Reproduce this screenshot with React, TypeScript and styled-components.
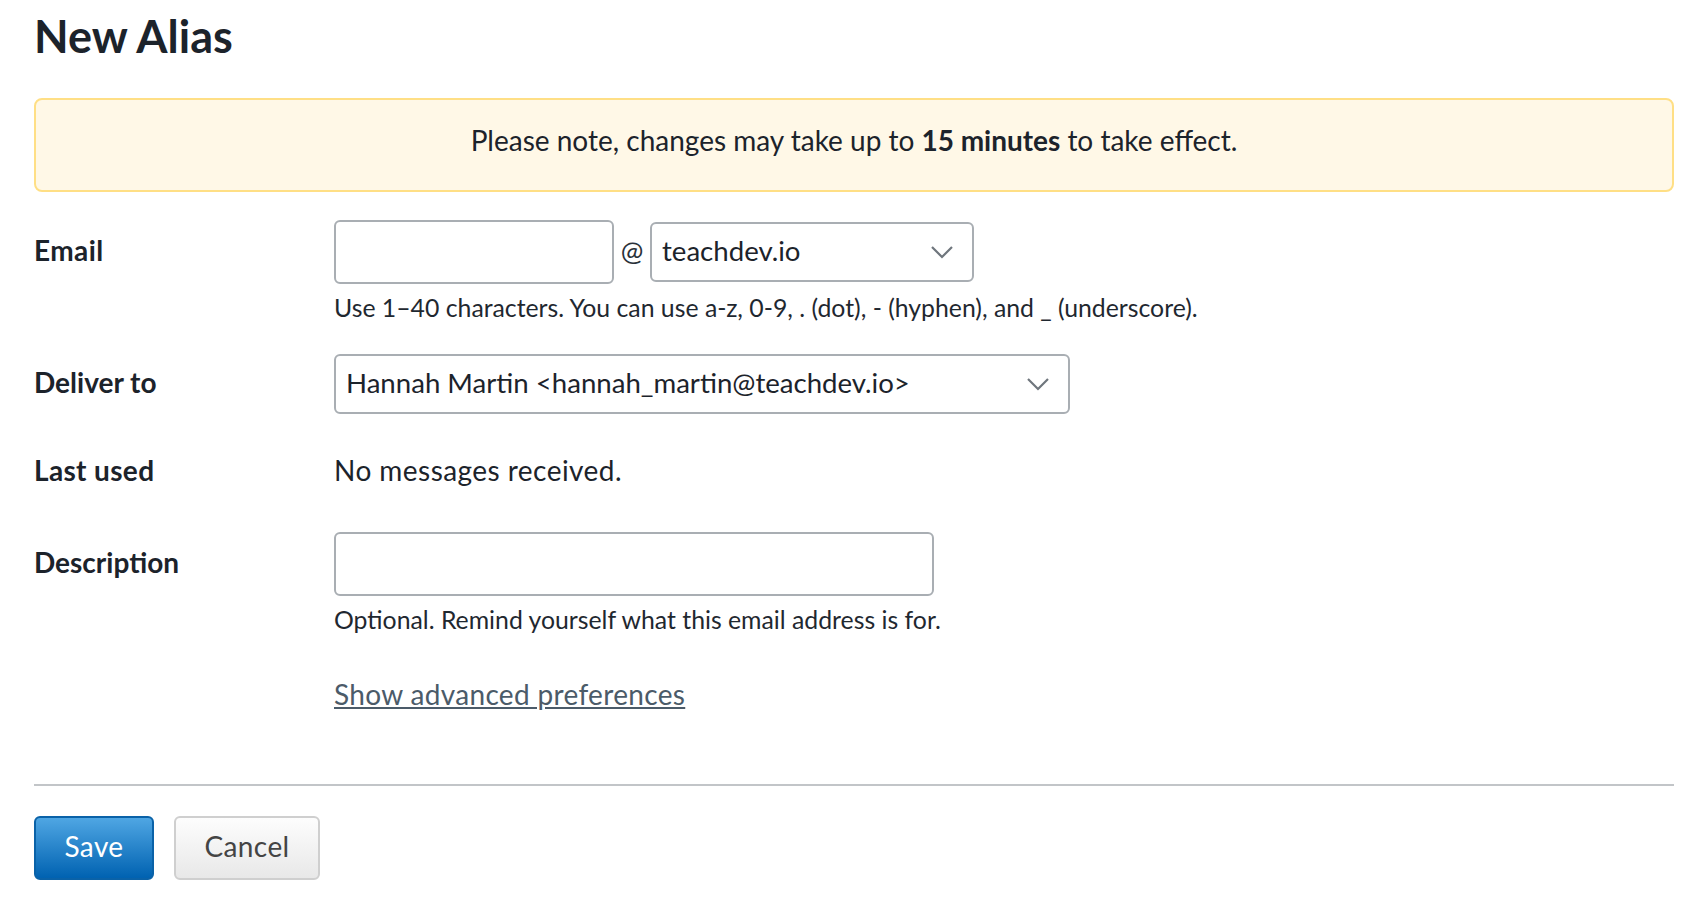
import React from "react";
import styled, { createGlobalStyle } from "styled-components";

const Global = createGlobalStyle`
  html, body { margin: 0; padding: 0; background: #fff; }
  body { font-family: "Lato", "Liberation Sans", sans-serif; color: #1c232b; }
`;

const Page = styled.main`
  width: 1704px;
  height: 910px;
  box-sizing: border-box;
  padding: 0 30px 0 34px;
  overflow: hidden;
`;
const Title = styled.h1`
  margin: 0;
  height: 98px;
  box-sizing: border-box;
  padding-top: 9px;
  font-size: 45px;
  line-height: 54px;
  font-weight: 700;
  color: #1c232b;
`;
const Banner = styled.div`
  height: 94px;
  box-sizing: border-box;
  display: flex;
  align-items: center;
  justify-content: center;
  padding-bottom: 10px;
  background: #fff8e7;
  border: 2px solid #ffdf85;
  border-radius: 8px;
  font-size: 28px;
  margin-bottom: 28px;
  b { font-weight: 700; margin: 0 0.25em; }
`;
const Row = styled.div<{ $after: number }>`
  display: grid;
  grid-template-columns: 300px 1fr;
  margin-bottom: ${(p) => p.$after}px;
`;
const Label = styled.label<{ $h: number; $ls?: number }>`
  font-size: 28px;
  font-weight: 700;
  line-height: ${(p) => p.$h}px;
  letter-spacing: ${(p) => p.$ls ?? 0}px;
`;
const Inline = styled.div`
  display: flex;
  align-items: center;
  height: 64px;
`;
const TextInput = styled.input<{ $w: number }>`
  display: block;
  width: ${(p) => p.$w}px;
  height: 64px;
  box-sizing: border-box;
  border: 2px solid #a9aeb3;
  border-radius: 6px;
  background: #fff;
  padding: 0 10px;
  font: inherit;
  outline: none;
`;
const At = styled.span`
  width: 36px;
  text-align: center;
  font-size: 27px;
  color: #2a323a;
  margin-bottom: 3px;
`;
const Select = styled.div<{ $w: number }>`
  width: ${(p) => p.$w}px;
  height: 60px;
  box-sizing: border-box;
  border: 2px solid #a9aeb3;
  border-radius: 6px;
  display: flex;
  align-items: center;
  justify-content: space-between;
  padding: 0 18px 0 10px;
  font-size: 27.6px;
  background: #fff;
`;
const SelectText = styled.span`
  margin-bottom: 4px;
`;
const Chevron = styled.svg`
  width: 24px;
  height: 14px;
  flex: none;
`;
const Hint = styled.div`
  margin-top: 7px;
  font-size: 24.8px;
  line-height: 34px;
  color: #1f2830;
`;
const Value = styled.div`
  font-size: 28px;
  line-height: 34px;
  letter-spacing: 0.45px;
`;
const AdvancedLink = styled.a`
  display: block;
  font-size: 28px;
  line-height: 34px;
  letter-spacing: 0.33px;
  color: #4b5b69;
  text-decoration: underline;
`;
const Divider = styled.hr`
  margin: 0 0 30px;
  border: 0;
  height: 2px;
  background: #c2c5c8;
`;
const Actions = styled.div`
  display: flex;
  gap: 20px;
`;
const Button = styled.button<{ $primary?: boolean; $w: number }>`
  width: ${(p) => p.$w}px;
  height: 64px;
  box-sizing: border-box;
  border-radius: 6px;
  padding: 0 0 4px;
  font-family: inherit;
  font-size: 28px;
  letter-spacing: 0.4px;
  border: 2px solid ${(p) => (p.$primary ? "#0a62a8" : "#cfcfcf")};
  color: ${(p) => (p.$primary ? "#fff" : "#444")};
  background: ${(p) =>
    p.$primary
      ? "linear-gradient(#4fa6e3, #0062b1)"
      : "linear-gradient(#fdfdfd, #e8e8e8)"};
`;

const ChevronIcon = () => (
  <Chevron viewBox="0 0 24 14" fill="none" stroke="#6f767d" strokeWidth="2.2">
    <polyline points="2,2 12,12 22,2" />
  </Chevron>
);

export default function App() {
  return (
    <Page>
      <Global />
      <Title>New Alias</Title>
      <Banner>
        Please note, changes may take up to <b>15 minutes</b> to take effect.
      </Banner>
      <Row $after={29}>
        <Label $h={60} $ls={0.4}>Email</Label>
        <div>
          <Inline>
            <TextInput $w={280} />
            <At>@</At>
            <Select $w={324}>
              <SelectText>teachdev.io</SelectText>
              <ChevronIcon />
            </Select>
          </Inline>
          <Hint>Use 1–40 characters. You can use a-z, 0-9, . (dot), - (hyphen), and _ (underscore).</Hint>
        </div>
      </Row>
      <Row $after={39}>
        <Label $h={56}>Deliver to</Label>
        <Select $w={736}>
          <SelectText>{"Hannah Martin <hannah_martin@teachdev.io>"}</SelectText>
          <ChevronIcon />
        </Select>
      </Row>
      <Row $after={45}>
        <Label $h={34} $ls={0.35}>Last used</Label>
        <Value>No messages received.</Value>
      </Row>
      <Row $after={40}>
        <Label $h={60}>Description</Label>
        <div>
          <TextInput $w={600} />
          <Hint>Optional. Remind yourself what this email address is for.</Hint>
        </div>
      </Row>
      <Row $after={73}>
        <span />
        <AdvancedLink href="#">Show advanced preferences</AdvancedLink>
      </Row>
      <Divider />
      <Actions>
        <Button $primary $w={120}>Save</Button>
        <Button $w={146}>Cancel</Button>
      </Actions>
    </Page>
  );
}
